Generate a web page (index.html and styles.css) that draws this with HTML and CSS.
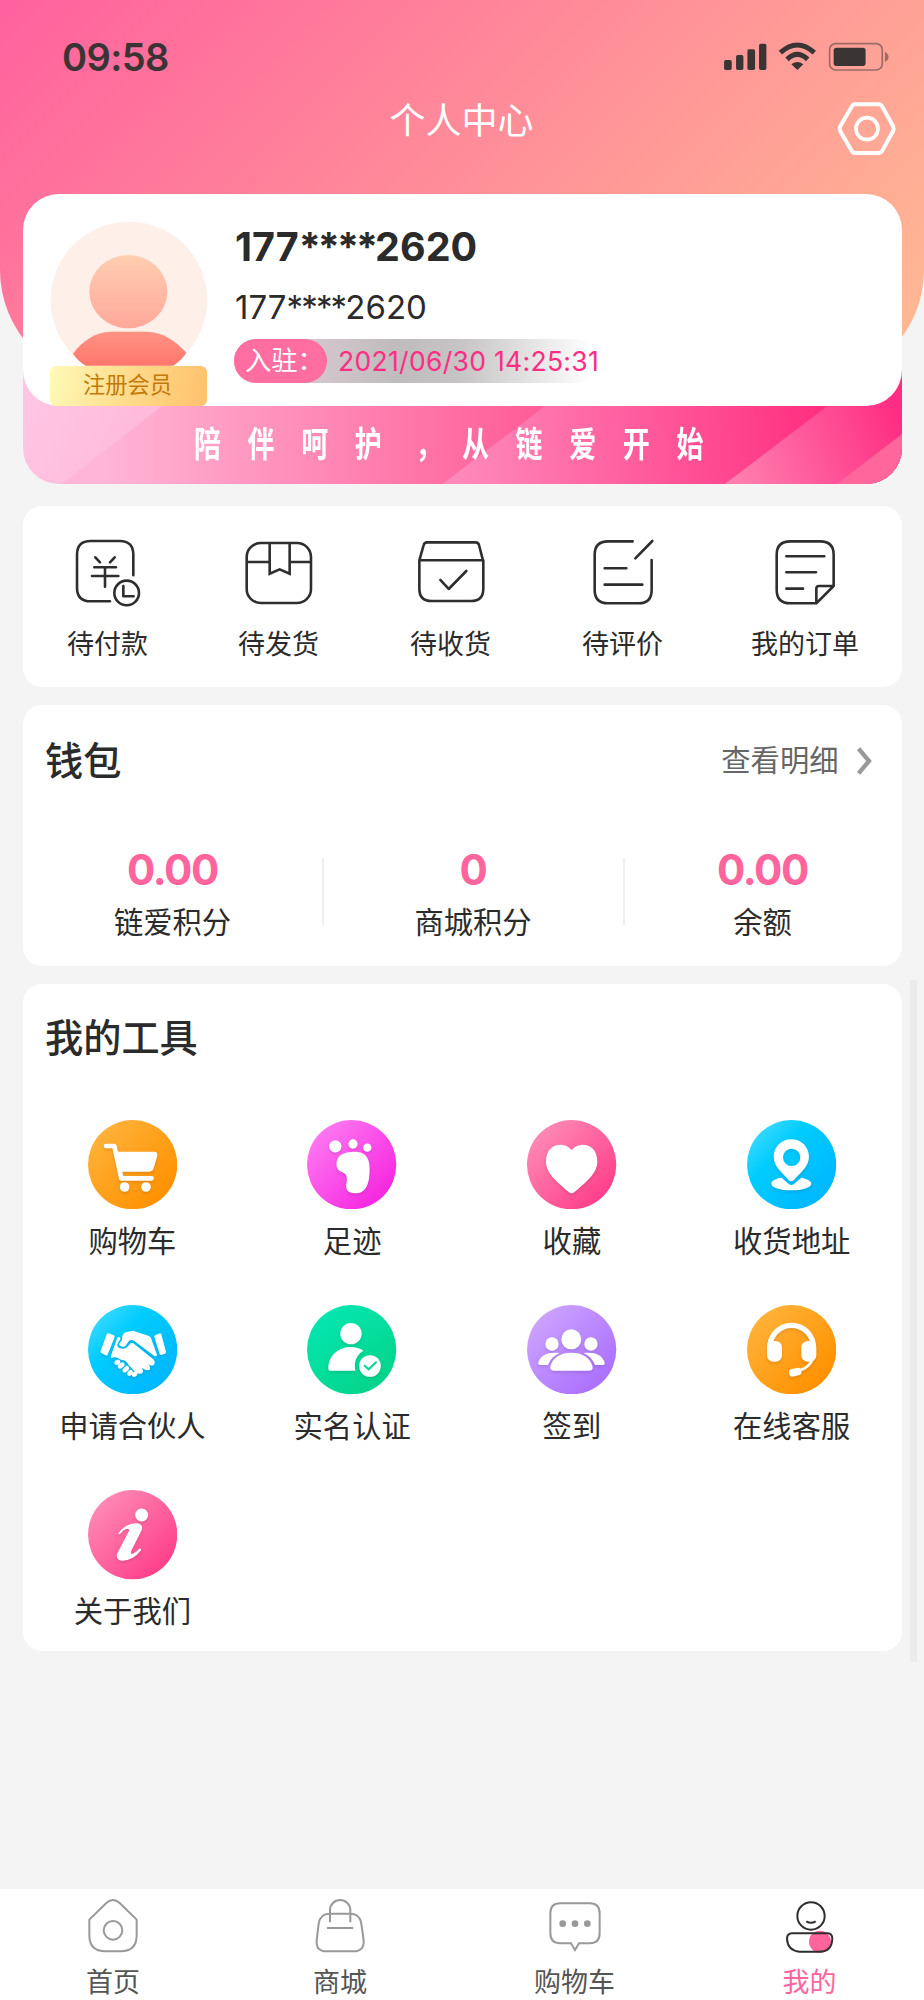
FILE: index.html
```html
<!DOCTYPE html>
<html lang="zh-CN">
<head>
<meta charset="utf-8">
<title>个人中心</title>
<link rel="stylesheet" href="styles.css">
</head>
<body>
<div class="page">
  <header class="hero">
    <div class="status">
      <span class="time">09:58</span>
      <svg class="status-icons" viewBox="780 120 510 100" fill="#3b3434">
        <rect x="786" y="180" width="23" height="30" rx="5"/>
        <rect x="822" y="165" width="22" height="45" rx="5"/>
        <rect x="856" y="148" width="23" height="62" rx="5"/>
        <rect x="891" y="131" width="22" height="79" rx="5"/>
        <path d="M955 158Q1006 112 1057 158M975 178Q1006 149 1037 178" fill="none" stroke="#3b3434" stroke-width="15"/>
        <path d="M1006 210L988 193Q1006 179 1024 193Z"/>
        <rect x="1103" y="131" width="158" height="79" rx="18" fill="none" stroke="#3b3434" stroke-width="5" opacity=".5"/>
        <rect x="1115" y="143" width="96" height="55" rx="8"/>
        <path d="M1269 155Q1280 162 1280 171T1269 186Z" opacity=".5"/>
      </svg>
    </div>
    <div class="navbar">
      <h1 class="title">个人中心</h1>
      <svg class="settings" viewBox="1120 300 190 175" fill="none" stroke="#fff">
        <path stroke-width="12" d="M1180 313H1250Q1258 313 1262 320L1294 378Q1298 386 1294 394L1262 452Q1258 459 1250 459H1182Q1174 459 1170 452L1136 394Q1132 386 1136 378L1170 320Q1174 313 1180 313Z"/>
        <circle cx="1216" cy="386" r="33" stroke-width="11"/>
      </svg>
    </div>
  </header>

  <main class="content">
    <section class="member">
      <svg class="ribbon" viewBox="23 369 878 115" preserveAspectRatio="none">
        <defs>
          <linearGradient id="r1" gradientUnits="userSpaceOnUse" x1="23" y1="400" x2="130" y2="450"><stop stop-color="#ffc6e3"/><stop offset="1" stop-color="#ffbbd9"/></linearGradient>
          <linearGradient id="r2" gradientUnits="userSpaceOnUse" x1="100" y1="440" x2="530" y2="440"><stop stop-color="#ffb6d6"/><stop offset="1" stop-color="#ff5e98"/></linearGradient>
          <linearGradient id="r3" gradientUnits="userSpaceOnUse" x1="460" y1="460" x2="820" y2="440"><stop stop-color="#ff89b8"/><stop offset="1" stop-color="#ff2f80"/></linearGradient>
          <linearGradient id="r4" gradientUnits="userSpaceOnUse" x1="735" y1="475" x2="895" y2="410"><stop stop-color="#ff7eae"/><stop offset="1" stop-color="#ff2d82"/></linearGradient>
        </defs>
        <path fill="url(#r1)" d="M23 369H901V484H23Z"/>
        <path fill="url(#r2)" d="M209 369H901V484H62Z"/>
        <path fill="url(#r3)" d="M593 369H901V484H442Z"/>
        <path fill="url(#r4)" d="M875 369H901V484H724Z"/>
        <path fill="#ff669c" d="M901 434V484H836Z"/>
      </svg>
      <div class="profile">
        <div class="avatar-col">
          <svg class="avatar" viewBox="150 123 474 434">
            <defs>
              <linearGradient id="av1" x1="0" y1="0" x2="0" y2="1"><stop stop-color="#ffceb1"/><stop offset="1" stop-color="#ffa899"/></linearGradient>
              <linearGradient id="av2" x1="0" y1="0" x2="0" y2="1"><stop stop-color="#ff9384"/><stop offset="1" stop-color="#ff766c"/></linearGradient>
            </defs>
            <circle cx="387" cy="360" r="235" fill="#ffefe9"/>
            <ellipse cx="385" cy="335" rx="117" ry="110" fill="url(#av1)"/>
            <path fill="url(#av2)" d="M219 521C245 483 290 455 330 455H442C485 455 530 483 559 519Q543 542 520 557H258Q235 545 219 521Z"/>
          </svg>
          <div class="badge">注册会员</div>
        </div>
        <div class="info">
          <div class="name">177<span class="mask">****</span>2620</div>
          <div class="phone">177<span class="mask">****</span>2620</div>
          <div class="joined"><span class="joined-label">入驻：</span><span class="joined-date">2021/06/30 14:25:31</span></div>
        </div>
      </div>
      <div class="slogan"><span class="slogan-text">陪伴呵护<span class="comma">，</span>从链爱开始</span></div>
    </section>

    <section class="card orders">
      <a class="order"><svg class="order-icon" viewBox="159 110 210 220"><path d="M340 228V166Q340 125 299 125H212Q171 125 171 166V265Q171 306 212 306H270M226 174L240 189M284 174L270 189M223 204H288M216 230H295M255 204V262M310 260V291H341"/><circle cx="320" cy="281" r="37"/></svg><span>待付款</span></a>
      <a class="order"><svg class="order-icon" viewBox="672 110 210 220"><rect x="680" y="131" width="193" height="180" rx="42"/><path stroke-linecap="butt" stroke-linejoin="miter" d="M680 188H749M809 188H874M749 133V223L779 210L809 223V133"/></svg><span>待发货</span></a>
      <a class="order"><svg class="order-icon" viewBox="1188 110 210 220"><path d="M1198 183L1211 137Q1213 129 1221 129H1367Q1375 129 1377 137L1389 183M1198 183H1390M1198 183V268Q1198 305 1235 305H1353Q1390 305 1390 268V183M1261 242L1286 269L1339 215"/></svg><span>待收货</span></a>
      <a class="order"><svg class="order-icon" viewBox="378 110 210 220"><path d="M512 126H438Q398 126 398 166V272Q398 312 438 312H530Q569 312 569 272V182M520 177L571 125M428 207H493M428 256H541"/></svg><span>待评价</span></a>
      <a class="order"><svg class="order-icon" viewBox="924 110 210 220"><path d="M1063 312H985Q944 312 944 272V166Q944 126 985 126H1075Q1115 126 1115 166V260L1063 312V268Q1063 260 1071 260H1115M973 171H1087M973 219H1062M973 268H1023"/></svg><span>我的订单</span></a>
    </section>

    <section class="card wallet">
      <div class="wallet-head">
        <h2 class="heading">钱包</h2>
        <a class="more">查看明细<svg class="chevron" viewBox="0 0 16 28"><path d="M2.600 1.600L13 14L2.600 26.400" fill="none" stroke="#999" stroke-width="4.300"/></svg></a>
      </div>
      <div class="stats">
        <div class="stat"><strong>0.00</strong><span>链爱积分</span></div>
        <div class="stat"><strong>0</strong><span>商城积分</span></div>
        <div class="stat"><strong>0.00</strong><span>余额</span></div>
      </div>
    </section>

    <section class="card tools">
      <h2 class="heading">我的工具</h2>
      <div class="tool-grid">
        <a class="tool"><svg class="tool-icon" viewBox="84 59 268 268">
          <defs>
            <linearGradient id="orange" x1=".1" y1=".1" x2=".85" y2=".85"><stop stop-color="#ffb33b"/><stop offset="1" stop-color="#ff9100"/></linearGradient>
            <linearGradient id="magenta" x1=".1" y1=".1" x2=".9" y2=".9"><stop stop-color="#ff7bf2"/><stop offset="1" stop-color="#f522df"/></linearGradient>
            <linearGradient id="pink" x1=".1" y1=".1" x2=".9" y2=".9"><stop stop-color="#ff8cb7"/><stop offset="1" stop-color="#ff3b87"/></linearGradient>
            <linearGradient id="cyan" x1=".1" y1=".1" x2=".85" y2=".85"><stop stop-color="#3bdaff"/><stop offset=".35" stop-color="#00ccff"/><stop offset="1" stop-color="#00b7ff"/></linearGradient>
            <linearGradient id="green" x1=".2" y1=".1" x2=".8" y2=".9"><stop stop-color="#04e6b0"/><stop offset="1" stop-color="#04d48a"/></linearGradient>
            <linearGradient id="purple" x1=".1" y1=".1" x2=".85" y2=".85"><stop stop-color="#cda4ff"/><stop offset="1" stop-color="#ab70ff"/></linearGradient>
          </defs>
          <circle cx="218" cy="193" r="134" fill="url(#orange)"/>
          <g class="glyph"><path d="M138 137H163L184 234H275" fill="none" stroke="#fff" stroke-width="14" stroke-linecap="round" stroke-linejoin="round"/><path d="M170 154H282Q294 154 292 167L281 204Q278 214 268 214H184Z"/><circle cx="194" cy="260" r="14.5"/><circle cx="258" cy="260" r="14.5"/></g></svg><span>购物车</span></a>
        <a class="tool"><svg class="tool-icon" viewBox="742 59 268 268"><circle cx="876" cy="193" r="134" fill="url(#magenta)"/>
          <g class="glyph"><circle cx="827" cy="138" r="18.5"/><circle cx="880" cy="131" r="14"/><circle cx="923" cy="142" r="12.5"/><path d="M884 154C912 154 930 166 930 205C930 250 920 279 886 279C864 279 858 268 860 252C862 238 866 222 848 216C832 210 829 198 831 184C834 162 858 154 884 154Z"/></g></svg><span>足迹</span></a>
        <a class="tool"><svg class="tool-icon" viewBox="82 59 268 268"><circle cx="216" cy="193" r="134" fill="url(#pink)"/>
          <g class="glyph"><path d="M216 150C198 124 139 124 139 184C139 222 180 250 207 275Q216 282 225 275C252 250 293 222 293 184C293 124 234 124 216 150Z"/></g></svg><span>收藏</span></a>
        <a class="tool"><svg class="tool-icon" viewBox="740 59 268 268"><circle cx="874" cy="193" r="134" fill="url(#cyan)"/>
          <g class="glyph"><path fill-rule="evenodd" d="M873 117C903 117 926 140 926 170C926 200 895 222 882 238Q873 247 864 238C851 222 820 200 820 170C820 140 843 117 873 117ZM874 145A26 26 0 1 0 874 197A26 26 0 1 0 874 145Z"/><path d="M844 232L866 252Q873 257 880 252L903 232C920 235 933 242 933 250C933 262 906 270 873 270C840 270 813 262 813 250C813 240 830 233 844 232Z"/></g></svg><span>收货地址</span></a>
        <a class="tool"><svg class="tool-icon" viewBox="84 615 268 268"><circle cx="218" cy="749" r="134" fill="url(#cyan)"/>
          <g class="glyph"><path d="M145 700L162 706Q165 708 164 711L143 764Q141 768 137 766L124 759Q120 757 122 753L140 703Q142 699 145 700Z"/><path d="M286 706L299 700Q303 699 304 703L318 755Q319 759 315 761L304 765Q300 766 299 762L283 711Q282 707 286 706Z"/>
          <path d="M187 709Q188 700 197 697L219 692L265 707Q271 709 273 714L291 764Q291 770 284 769L224 724Q211 715 204 727L197 737Q190 743 181 738Q174 734 181 727Q188 720 187 709Z"/>
          <path d="M173 711Q179 711 182 715Q178 722 174 729Q168 739 178 744Q193 750 203 740L210 731Q214 727 220 730L278 776Q288 784 282 794Q275 800 263 793Q274 801 269 809Q262 815 245 803Q252 812 247 819Q240 826 222 812Q214 803 206 795Q198 779 184 780Q170 767 153 774Q152 768 156 758Z"/>
          <path d="M170 788L174 786M180 799L187 794M194 811L201 805M208 821L212 817M222 824L226 821" fill="none" stroke="#fff" stroke-width="14" stroke-linecap="round"/></g></svg><span>申请合伙人</span></a>
        <a class="tool"><svg class="tool-icon" viewBox="742 615 268 268"><circle cx="876" cy="749" r="134" fill="url(#green)"/>
          <g class="glyph"><circle cx="874" cy="701" r="32"/><path d="M806 806C806 765 838 741 874 741C888 741 900 745 911 752C890 766 882 785 887 812H811Q806 812 806 806Z"/><circle cx="931" cy="798" r="32.5"/></g><path d="M915 797L927 808L949 787" fill="none" stroke="#04d795" stroke-width="6" stroke-linecap="round"/></svg><span>实名认证</span></a>
        <a class="tool"><svg class="tool-icon" viewBox="82 615 268 268"><circle cx="216" cy="749" r="134" fill="url(#purple)"/>
          <g class="glyph"><circle cx="215" cy="718" r="30"/><circle cx="157" cy="732" r="20"/><circle cx="274" cy="732" r="20"/><path d="M164 812Q150 812 152 800C158 772 185 758 215 758C246 758 272 772 279 800Q281 812 267 812Z"/><path d="M179 759C163 767 152 778 145 795H121Q114 795 116 787C123 765 145 755 179 759ZM252 759C268 767 279 778 286 795H310Q317 795 315 787C308 765 286 755 252 759Z"/></g></svg><span>签到</span></a>
        <a class="tool"><svg class="tool-icon" viewBox="740 615 268 268"><circle cx="874" cy="749" r="134" fill="url(#orange)"/>
          <g class="glyph"><path d="M809 745V741A65 65 0 0 1 939 741V745" fill="none" stroke="#fff" stroke-width="16"/><rect x="800" y="723" width="45" height="62" rx="19"/><rect x="903" y="723" width="45" height="62" rx="19"/><path d="M801 730H812V765H801ZM936 730H947V765H936Z"/><path d="M937 778Q927 802 899 811" fill="none" stroke="#fff" stroke-width="8"/><rect x="866" y="805" width="38" height="23" rx="11.5" transform="rotate(-12 885 817)"/></g></svg><span>在线客服</span></a>
        <a class="tool"><svg class="tool-icon" viewBox="204 271 268 268"><circle cx="338" cy="405" r="134" fill="url(#pink)"/>
          <g class="glyph"><circle cx="365" cy="346" r="19.5"/><path d="M295 401Q318 370 350 371Q371 373 365 392L334 453Q329 467 341 461Q350 456 358 447Q364 446 363 452Q340 483 306 483Q287 481 291 463L327 394Q329 385 318 388Q309 391 300 403Q295 405 295 401Z"/></g></svg><span>关于我们</span></a>
      </div>
    </section>
    <div class="scrollbar"></div>
  </main>

  <nav class="tabbar">
    <a class="tab"><svg class="tab-icon" viewBox="252 80 180 175"><path d="M271 148L322 98Q342 80 362 98L413 148V195Q413 243 365 243H319Q271 243 271 195Z"/><circle cx="342" cy="180" r="28"/></svg><span>首页</span></a>
    <a class="tab"><svg class="tab-icon" viewBox="932 80 180 175"><path d="M991 130H1053Q1082 130 1086 160L1093 210Q1095 243 1063 243H981Q949 243 952 210L958 160Q962 130 991 130ZM992 156V119A30.500 30 0 0 1 1053 119V156M983 173H1062"/></svg><span>商城</span></a>
    <a class="tab"><svg class="tab-icon" viewBox="251 80 180 175"><path d="M297 99H385Q415 99 415 129V189Q415 219 385 219H353L341 239L329 219H297Q267 219 267 189V129Q267 99 297 99Z"/><g fill="#999" stroke="none"><circle cx="304" cy="160" r="10"/><circle cx="341" cy="160" r="10"/><circle cx="378" cy="160" r="10"/></g></svg><span>购物车</span></a>
    <a class="tab active"><svg class="tab-icon" viewBox="954 80 180 175"><circle cx="1074" cy="214" r="33" fill="#ff659c" stroke="none"/><circle cx="1047" cy="137" r="41"/><path d="M1033 153Q1047 162 1061 153M990 189H1097Q1111 189 1111 206Q1109 244 1073 244H1013Q977 241 975 206Q975 189 990 189Z"/></svg><span>我的</span></a>
  </nav>
</div>
</body>
</html>
```
FILE: styles.css
```css
* {
  box-sizing: border-box;
}

body {
  margin: 0;
  background: #f4f4f4;
  font-family: Inter, "Noto Sans CJK SC", sans-serif;
  color: #2b2b2b;
}

h1, h2 {
  margin: 0;
}

svg {
  display: block;
}

.page {
  position: relative;
  display: flex;
  flex-direction: column;
  width: 924px;
  height: 2000px;
  overflow: hidden;
}

.page::before {
  content: "";
  position: absolute;
  inset: 0 0 auto;
  height: 383px;
  border-radius: 0 0 113px 113px;
  background: linear-gradient(135deg, #ff619e, #ffbd93);
}

.hero {
  position: relative;
  height: 194px;
}

.status {
  display: flex;
  align-items: center;
  justify-content: space-between;
  height: 80px;
  padding: 34px 32px 0 62px;
}

.time {
  font-size: 38px;
  font-weight: 600;
  line-height: 46px;
  letter-spacing: -.6px;
  color: #3b3434;
}

.status-icons {
  width: 170px;
  height: 33.3px;
}

.navbar {
  display: grid;
  grid-template-columns: 1fr auto 1fr;
  padding: 16px 26px 0 25px;
}

.title {
  grid-column: 2;
  font-size: 36px;
  font-weight: 400;
  line-height: 50px;
  color: #fff;
}

.settings {
  justify-self: end;
  width: 63.3px;
  height: 58.3px;
  margin-top: 4px;
}

.content {
  position: relative;
  flex: 1;
  padding: 0 22.500px;
}

.member {
  position: relative;
  height: 290px;
  border-radius: 0 0 36px 36px;
  overflow: hidden;
}

.ribbon {
  position: absolute;
  left: 0;
  bottom: 0;
  width: 100%;
  height: 115px;
}

.profile {
  position: relative;
  display: flex;
  height: 211.7px;
  padding: 27px 27px 0 27.500px;
  border-radius: 36px;
  background: #fff;
}

.avatar-col {
  width: 158px;
}

.avatar {
  width: 158px;
  height: 144.7px;
}

.badge {
  width: 157px;
  height: 40px;
  padding-right: 2px;
  border-radius: 6px;
  background: linear-gradient(100deg, #fffab8, #ffdb8b 50%, #ffc16c);
  font-size: 22.3px;
  line-height: 38px;
  text-align: center;
  color: #c47a08;
}

.info {
  padding-left: 26px;
}

.name {
  margin-top: 1px;
  padding-left: 1px;
  font-size: 39.5px;
  font-weight: 700;
  line-height: 50px;
}

.name .mask {
  letter-spacing: -3px;
}

.phone {
  margin-top: 15px;
  padding-left: 1px;
  font-size: 33px;
  line-height: 40px;
}

.phone .mask {
  letter-spacing: -1.8px;
}

.joined {
  display: flex;
  align-items: center;
  width: 365px;
  height: 44.6px;
  margin-top: 11.700px;
  border-radius: 23px;
  background: linear-gradient(90deg, #d8c8d0 18%, #bfbcbd 45%, #c6c4c5 62%, #fff 98%);
  line-height: 44px;
}

.joined-label {
  width: 93.5px;
  height: 44.6px;
  padding-left: 11px;
  border-radius: 23px;
  background: #ff6da1;
  font-size: 26.3px;
  white-space: nowrap;
  color: #fff;
}

.joined-date {
  padding-left: 11px;
  font-size: 26.5px;
  letter-spacing: .3px;
  white-space: nowrap;
  color: #ff2d83;
}

.slogan {
  position: relative;
  height: 78px;
  padding-left: 171.500px;
  overflow: hidden;
}

.slogan-text {
  display: block;
  transform: scaleY(1.3);
  font-size: 27px;
  font-weight: 700;
  line-height: 78px;
  letter-spacing: 26.6px;
  white-space: nowrap;
  color: #fff;
}

.comma {
  padding-left: 7px;
  letter-spacing: 19.600px;
}

.card {
  border-radius: 19px;
  background: #fff;
}

.orders {
  display: grid;
  grid-template-columns: 170px 172px 172px 172px 1fr;
  height: 180.6px;
  margin-top: 22px;
  padding-top: 30.2px;
}

.order {
  display: flex;
  flex-direction: column;
  align-items: center;
  font-size: 27px;
  line-height: 40px;
}

.order-icon {
  width: 70px;
  height: 73.3px;
  margin-bottom: 15.500px;
  fill: none;
  stroke: #2e2e2e;
  stroke-width: 7.8;
  stroke-linecap: round;
  stroke-linejoin: round;
}

.wallet {
  height: 261px;
  margin-top: 18.200px;
  padding-top: 30px;
}

.wallet-head {
  display: flex;
  align-items: center;
  justify-content: space-between;
  padding: 0 30px 0 22.500px;
}

.heading {
  font-size: 38.2px;
  font-weight: 500;
  line-height: 50px;
}

.more {
  display: flex;
  align-items: center;
  gap: 17px;
  font-size: 29.3px;
  line-height: 52px;
  color: #666;
}

.chevron {
  width: 16px;
  height: 28px;
}

.stats {
  display: grid;
  grid-template-columns: 300px 301px 1fr;
  margin-top: 58.500px;
}

.stat {
  position: relative;
  display: flex;
  flex-direction: column;
  align-items: center;
  font-size: 29.3px;
  line-height: 40px;
}

.stat strong {
  margin-bottom: 7.500px;
  font-size: 42px;
  font-weight: 700;
  line-height: 50px;
  letter-spacing: -1.4px;
  color: #ff659c;
}

.stat + .stat::before {
  content: "";
  position: absolute;
  left: -1px;
  top: 12.500px;
  width: 2px;
  height: 67px;
  background: #efefef;
}

.tools {
  height: 667px;
  margin-top: 18.200px;
  padding-top: 29.500px;
}

.tools .heading {
  padding-left: 22.500px;
}

.tool-grid {
  display: grid;
  grid-template-columns: repeat(4, 1fr);
  grid-auto-rows: 185.200px;
  margin-top: 56.500px;
}

.tool {
  display: flex;
  flex-direction: column;
  align-items: center;
  font-size: 29.3px;
  line-height: 40px;
}

.tool-icon {
  width: 89.3px;
  height: 89.3px;
  margin-bottom: 12.700px;
}

.glyph {
  fill: #fff;
  filter: drop-shadow(0 5px 5px rgba(0, 0, 0, .12));
}

.scrollbar {
  position: absolute;
  top: 786px;
  right: 7px;
  width: 7px;
  height: 682px;
  background: #ebebeb;
}

.tabbar {
  position: relative;
  display: grid;
  grid-template-columns: 226px 228px 241px 1fr;
  height: 111px;
  padding-top: 7.700px;
  background: #fff;
}

.tab {
  display: flex;
  flex-direction: column;
  align-items: center;
  font-size: 27px;
  line-height: 36px;
  color: #555;
}

.tab-icon {
  width: 60px;
  height: 58.3px;
  margin-bottom: 10px;
  fill: none;
  stroke: #999;
  stroke-width: 6;
}

.active {
  color: #ff659c;
}

.active .tab-icon {
  stroke: #2e2e2e;
}
```
